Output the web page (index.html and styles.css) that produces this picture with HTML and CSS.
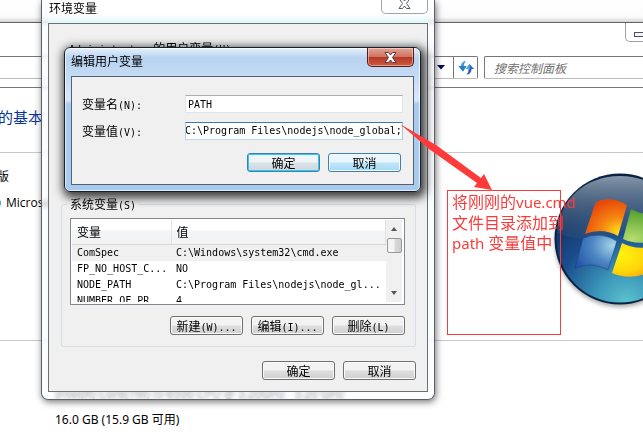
FILE: index.html
```html
<!DOCTYPE html>
<html lang="zh-CN">
<head>
<meta charset="utf-8">
<title>环境变量</title>
<link rel="stylesheet" href="styles.css">
</head>
<body>
<div class="desktop">
  <main class="explorer">
    <div class="explorer-title"><button class="minimize" aria-label="最小化"><span></span></button></div>
    <div class="explorer-bar">
      <div class="address">
        <button class="bar-button" aria-label="展开地址">
          <svg width="8" height="5" viewBox="0 0 8 5"><path d="M0 0h8L4 4.500z" fill="#00005e"/></svg>
        </button>
        <button class="bar-button refresh" aria-label="刷新">
          <svg width="16" height="16" viewBox="0 0 16 16">
            <path d="M8 1C5.500 1 3 3 3 6H.5L5 11.500 8.500 6H6C6 4 6.500 2.500 8 1z" fill="#3fa2e0"/>
            <path d="M.5 6H8.500L5 11.500z" fill="#2b7cc8"/>
            <path d="M8.500 14.500c3 0 5-2 5-5.500H16L11.500 4 8 9h2.500c0 2.500-.5 4-2 5.500z" fill="#2c62b4"/>
            <path d="M11.500 4L8 9h4z" fill="#4ba9e6"/>
          </svg>
        </button>
      </div>
      <input class="search" type="search" placeholder="搜索控制面板" aria-label="搜索控制面板">
    </div>
    <h1 class="heading">的基本</h1>
    <section class="edition">
      <div class="edition-text"><p>版</p><p><span class="dot"></span>Microsoft</p></div>
      <svg class="logo" width="144" height="144" viewBox="0 0 144 144" role="img" aria-label="Windows">
        <defs>
          <radialGradient id="orb" cx=".55" cy="1" r=".95">
            <stop offset="0" stop-color="#5cc3cd"/><stop offset=".25" stop-color="#3b97ba"/><stop offset=".58" stop-color="#1b4d8c"/><stop offset="1" stop-color="#0b2450"/>
          </radialGradient>
          <linearGradient id="shine" x1="0" y1="0" x2="0" y2="1"><stop offset="0" stop-color="#a3b3bf" stop-opacity=".8"/><stop offset="1" stop-color="#40566e" stop-opacity=".25"/></linearGradient>
          <radialGradient id="red" cx=".8" cy=".9" r=".9"><stop offset="0" stop-color="#ffe01c"/><stop offset=".45" stop-color="#f68712"/><stop offset="1" stop-color="#e8480a"/></radialGradient>
          <radialGradient id="green" cx=".2" cy=".9" r="1"><stop offset="0" stop-color="#b7df70"/><stop offset="1" stop-color="#429722"/></radialGradient>
          <radialGradient id="blue" cx=".9" cy=".3" r="1"><stop offset="0" stop-color="#a5d6ea"/><stop offset=".5" stop-color="#4d86c3"/><stop offset="1" stop-color="#2455aa"/></radialGradient>
          <radialGradient id="yellow" cx=".2" cy=".35" r="1"><stop offset="0" stop-color="#fff30c"/><stop offset=".5" stop-color="#ffd60a"/><stop offset="1" stop-color="#f08a08"/></radialGradient>
          <filter id="soft"><feGaussianBlur stdDeviation="2"/></filter>
        </defs>
        <ellipse cx="72" cy="75" rx="65" ry="65" fill="#555" opacity=".5" filter="url(#soft)"/>
        <circle cx="72" cy="72" r="65.500" fill="#0a2143"/>
        <circle cx="72" cy="72" r="63.500" fill="url(#orb)"/>
        <path d="M9 66C11 32 38 9 72 9s61 23 63 57C112 52 94 57 74 64S32 76 9 66z" fill="url(#shine)"/>
        <path d="M47 37Q49 34 54 33Q66 30 79 38L70 69Q54 60 37 67Z" fill="url(#red)"/>
        <path d="M83 42Q101 52 122 43L112 71Q92 80 75 72Z" fill="url(#green)"/>
        <path d="M35 71Q52 64 69 74L60 103Q44 94 27 101Z" fill="url(#blue)" stroke="#143b7c" stroke-opacity=".5"/>
        <path d="M74 76Q91 85 111 77L102 105Q82 114 64 106Z" fill="url(#yellow)"/>
      </svg>
    </section>
    <div class="specs"><p>Intel(R) Core(TM) i5-6500 CPU @ 3.20GHz &nbsp; 3.20 GHz</p><p>16.0 GB (15.9 GB 可用)</p></div>
  </main>

  <section class="env-window" aria-label="环境变量">
    <header class="env-title"><span>环境变量</span><button class="env-close" aria-label="关闭"><svg width="13" height="11" viewBox="0 0 13 11"><path d="M1 .5h3.500l2 2.500 2-2.500H12L8.500 5.500 12 10.500H8.500l-2-2.500-2 2.500H1L4.500 5.500z" fill="#fff" stroke="#555a66"/></svg></button></header>
    <div class="env-client">
      <p class="user-heading"><span class="m">Administrator </span>的用户变量<span class="m">(U)</span></p>
      <fieldset class="group">
        <legend>系统变量<span class="m">(S)</span></legend>
        <div class="list">
          <div class="rows">
            <table>
              <thead><tr><th class="name">变量</th><th>值</th></tr></thead>
              <tbody>
                <tr class="selected"><td>ComSpec</td><td>C:\Windows\system32\cmd.exe</td></tr>
                <tr><td>FP_NO_HOST_C...</td><td>NO</td></tr>
                <tr><td>NODE_PATH</td><td>C:\Program Files\nodejs\node_gl...</td></tr>
                <tr><td>NUMBER_OF_PR...</td><td>4</td></tr>
              </tbody>
            </table>
          </div>
          <div class="scrollbar"><i class="up"></i><i class="thumb"></i><i class="down"></i></div>
        </div>
        <div class="actions"><button>新建<span class="m">(W)...</span></button><button>编辑<span class="m">(I)...</span></button><button>删除<span class="m">(L)</span></button></div>
      </fieldset>
      <div class="actions footer"><button>确定</button><button>取消</button></div>
    </div>
  </section>

  <form class="edit-window" aria-label="编辑用户变量">
    <header class="edit-title"><span>编辑用户变量</span><button type="button" class="edit-close" aria-label="关闭"><svg width="13" height="11" viewBox="0 0 13 11"><path d="M1 .5h3.500l2 2.500 2-2.500H12L8.500 5.500 12 10.500H8.500l-2-2.500-2 2.500H1L4.500 5.500z" fill="#fff" stroke="#5b3a40"/></svg></button></header>
    <div class="edit-client">
      <label for="var-name">变量名<span class="m">(N):</span></label><input id="var-name" class="field" type="text" value="PATH">
      <label for="var-value">变量值<span class="m">(V):</span></label><textarea id="var-value" class="field active" rows="1" wrap="off" spellcheck="false">C:\Program Files\nodejs\node_global;</textarea>
      <div class="actions"><button type="button" class="default">确定</button><button type="button" class="hot">取消</button></div>
    </div>
  </form>

  <svg class="arrow" width="96" height="70" viewBox="0 0 96 70" aria-hidden="true"><path d="M2 2L38 23 83 56 86 52 94 68 76 65 79 61 31 27z" fill="#ff3a3a"/></svg>
  <p class="note">将刚刚的<span>vue.cmd</span><br>文件目录添加到<br><span>path </span>变量值中</p>
</div>
<script src="script.js"></script>
</body>
</html>
```

FILE: styles.css
```css
* { box-sizing: border-box; }
body { margin: 0; overflow: hidden; background: #fff; color: #000; font: 12px/16px "Noto Sans CJK SC", sans-serif; }
p { margin: 0; }
button, input { font: inherit; color: inherit; padding: 0; margin: 0; }
.m { font-family: "DejaVu Sans Mono", monospace; font-size: 10px; line-height: 1; white-space: pre; }
.desktop { position: relative; min-height: 100vh; overflow: hidden; padding-top: 22px; background: linear-gradient(#fff 0, #fbfbfc 17px, #d5d5d5 22px, #fff 22px); }

/* System window */
.explorer { border-top: 1px solid #606060; background: #fff; }
.explorer-title { display: flex; justify-content: flex-end; height: 33px; }
.minimize { display: flex; align-items: center; justify-content: flex-end; width: 18px; height: 19px; border: 1px solid #a0a0a0; border-width: 0 0 1px 1px; border-radius: 0 0 0 5px; background: #fff; }
.minimize span { width: 9px; height: 5px; margin-top: 4px; border: 1px solid #4b5264; border-right: 0; background: #f3f3f3; }
.explorer-bar { display: flex; gap: 6px; height: 32px; padding-bottom: 8px; border-bottom: 1px solid #777; }
.address { display: flex; flex: 0 0 478px; justify-content: flex-end; border: 1px solid #777; border-bottom-color: #bbb; border-left: 0; border-radius: 0 2px 2px 0; }
.bar-button { display: flex; align-items: center; justify-content: center; width: 24px; border: 0; background: #fff; }
.refresh { border-left: 1px solid #777; }
.search { flex: 1; min-width: 0; padding-left: 9px; border: 1px solid #777; border-bottom-color: #bbb; border-right: 0; border-radius: 2px 0 0 2px; background: #fff; font-style: italic; outline: 0; }
.search::placeholder { color: #707070; opacity: 1; }
.heading { margin: 0 0 0 -2px; padding-top: 17px; height: 64px; font-size: 15px; line-height: 24px; font-weight: 400; color: #0a3399; }
.edition { display: flex; justify-content: space-between; height: 189px; border: 1px solid #c8c8c8; border-width: 1px 0; overflow: hidden; }
.edition-text { padding-top: 11px; margin-left: -3px; }
.edition-text p { display: flex; align-items: center; height: 26px; font-family: "Open Sans", "Noto Sans CJK SC", sans-serif; }
.dot { width: 4px; height: 6px; margin-right: 5px; border-radius: 3px; background: #3fb0ee; }
.logo { flex: none; margin: 14px -49px 0 0; }
.specs { padding: 41px 0 0 55px; font-family: "Noto Sans", "Noto Sans CJK SC", sans-serif; }
.specs p { height: 26px; line-height: 24px; white-space: nowrap; }

/* Buttons shared by both dialogs */
.actions { display: flex; justify-content: flex-end; gap: 8px; }
.actions button { width: 73px; height: 19px; border: 1px solid #707070; border-radius: 3px; box-shadow: inset 0 0 0 1px #fafafa; background: linear-gradient(#f3f3f3 0 48%, #dedede 52%, #d0d0d0); line-height: 16px; white-space: nowrap; }
.actions .default { border-color: #3c7fb1; box-shadow: inset 0 0 0 1px #35c8ee; background: linear-gradient(#eff4f6 0 48%, #d9e3e8 52%, #cbd8df); }
.actions .hot { border-color: #3c7fb1; background: linear-gradient(#eaf6fd 0 48%, #bfe6fb 52%, #a8d9f3); }

/* Environment variables dialog */
.env-window { position: absolute; left: 41px; top: 0; width: 394px; padding: 0 6px 7px; border: 1px solid #5c6065; border-top: 0; border-radius: 0 0 7px 7px; background: rgba(248,252,255,.6); backdrop-filter: blur(2px); box-shadow: 1px 2px 7px rgba(0,0,0,.55); }
.env-title { display: flex; justify-content: space-between; height: 23px; padding-left: 1px; background: linear-gradient(#fff 14px, #e2f7fa); }
.env-close { display: flex; align-items: center; justify-content: center; width: 47px; height: 14px; padding-bottom: 6px; border: 1px solid #a0a3a8; border-top: 0; border-radius: 0 0 5px 5px; background: #fff; }
.env-client { padding: 16px 11px 11px 12px; border: 1px solid #6c7075; background: #f0f0f0; }
.user-heading { height: 156px; padding-left: 8px; }
.group { min-width: 0; margin: 0; padding: 6px 10px 11px 8px; border: 1px solid #d5dfe5; border-radius: 3px; }
.group legend { margin-left: -3px; padding: 0 3px; }
.list { display: flex; height: 87px; padding: 1px 1px 2px; border: 1px solid #828790; background: #fff; }
.rows { flex: 1; overflow: hidden; }
.list table { width: 100%; table-layout: fixed; border-collapse: collapse; }
.list th { height: 24px; padding: 0 0 0 5px; text-align: left; font-weight: 400; border-right: 1px solid #e2e3e5; border-bottom: 1px solid #d5d5d5; background: linear-gradient(#fff 40%, #f4f5f7 45%, #f1f2f4); }
.list .name { width: 99px; }
.list td { height: 16px; padding: 0 0 0 5px; overflow: hidden; font: 10px/16px "DejaVu Sans Mono", monospace; white-space: nowrap; }
.selected { background: #f0f0f0; }
.scrollbar { display: flex; flex-direction: column; align-items: center; width: 16px; margin-right: 1px; padding: 7px 0; background: #f0f0f0; }
.up, .down { border: 3px solid transparent; }
.up { border-top: 0; border-bottom: 4px solid #555; }
.down { margin-top: auto; border-bottom: 0; border-top: 4px solid #555; }
.thumb { width: 15px; height: 15px; margin-top: 7px; border: 1px solid #979797; border-radius: 2px; background: linear-gradient(90deg, #f4f4f4 45%, #d8d8d8 55%, #cfcfcf); }
.group .actions { margin-top: 11px; }
.footer { margin-top: 14px; }

/* Edit user variable dialog */
.edit-window { position: absolute; left: 64px; top: 47px; width: 357px; padding: 0 6px 6px; border: 1px solid #16202c; border-radius: 6px; background: linear-gradient(#e6f1fc 0, #b8d3f0 10px, #c4dbf4 28px, #d6e7f9 52px, #a9cbee 56px); box-shadow: inset 0 0 0 1px rgba(255,255,255,.65), 2px 3px 10px 3px rgba(0,0,0,.75); }
.edit-title { display: flex; justify-content: space-between; height: 28px; line-height: 26px; }
.edit-close { display: flex; align-items: center; justify-content: center; width: 47px; height: 19px; border: 1px solid #571d1b; border-top: 0; border-radius: 0 0 5px 5px; box-shadow: inset 0 0 0 1px rgba(255,255,255,.4); background: linear-gradient(#e3a596, #cf7362 48%, #b73824 52%, #cf5a40); }
.edit-client { display: grid; grid-template-columns: 103px 1fr; grid-template-rows: 18px 18px auto; row-gap: 9px; padding: 18px 10px 12px; border: 1px solid #54616e; background: #f0f0f0; }
.edit-client label { line-height: 18px; }
.field { width: 100%; height: 18px; margin: 0; padding: 0 2px; border: 1px solid #e2e6ec; border-top-color: #abadb3; background: #fff; color: #000; font: 10px/16px "DejaVu Sans Mono", monospace; outline: 0; overflow: hidden; resize: none; }
.edit-client .active { border-color: #3d7bad #a4c9e3 #b7d9ed #b5cfe7; }
.edit-client .actions { grid-column: 1 / 3; margin: 4px 2px 0 0; }

/* Annotation over the windows */
.arrow { position: absolute; left: 398px; top: 122px; }
.note { position: absolute; left: 447px; top: 190px; width: 114px; height: 145px; padding: 0 4px; border: 1px solid #fa3c3c; color: #fa3c3c; font-size: 16px; line-height: 20px; white-space: nowrap; }
.note span { font-family: "Noto Sans", sans-serif; font-size: 15px; }
```

FILE: script.js
```js
// Show the end of the long path.
const valueField = document.getElementById("var-value");
valueField.scrollLeft = valueField.scrollWidth;
```
